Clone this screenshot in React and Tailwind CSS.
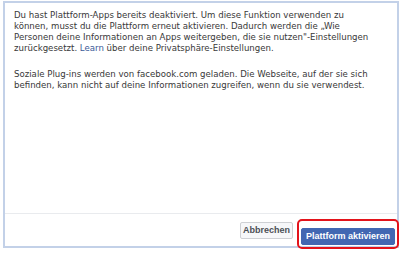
export default function App() {
  return (
    <div className="w-[403px] h-[253px] bg-white pt-[1px] pl-[3px]" style={{ fontFamily: 'Tahoma, "DejaVu Sans", sans-serif' }}>
      <div className="w-[396px] h-[247px] border-2 border-[#c3d1e8] flex flex-col bg-white">
        <div className="h-[214px] pl-[9px] pr-[18px] pt-[7px] text-[8.6px] leading-[11px] text-[#383838]">
          <p>
            Du hast Plattform-Apps bereits deaktiviert. Um diese Funktion verwenden zu können, musst du die Plattform erneut aktivieren. Dadurch werden die „Wie Personen deine Informationen an Apps weitergeben, die sie nutzen"-Einstellungen zurückgesetzt. <span className="text-[#3b5998]">Learn</span> über deine Privatsphäre-Einstellungen.
          </p>
          <p className="mt-[15px]">
            Soziale Plug-ins werden von facebook.com geladen. Die Webseite, auf der sie sich befinden, kann nicht auf deine Informationen zugreifen, wenn du sie verwendest.
          </p>
        </div>
        <div
          className="flex-1 border-t border-[#e9ebee] flex items-start justify-end gap-[8px] pt-[8px] pr-[2px]"
          style={{ fontFamily: '"Liberation Sans", Arial, sans-serif' }}
        >
          <button className="w-[53px] h-[17px] bg-[#f6f7f9] border border-[#ced0d4] rounded-[2px] text-[9px] font-bold text-[#4b4f56] leading-none">
            Abbrechen
          </button>
          <div className="relative">
            <button className="w-[94px] h-[17px] bg-[#4267b2] border border-[#4267b2] rounded-[2px] text-[9px] font-bold text-white leading-none">
              Plattform aktivieren
            </button>
            <span className="absolute -left-[4px] -right-[4px] -top-[3px] -bottom-[3px] border-2 border-[#e3131b] rounded-[5px]" />
          </div>
        </div>
      </div>
    </div>
  );
}
